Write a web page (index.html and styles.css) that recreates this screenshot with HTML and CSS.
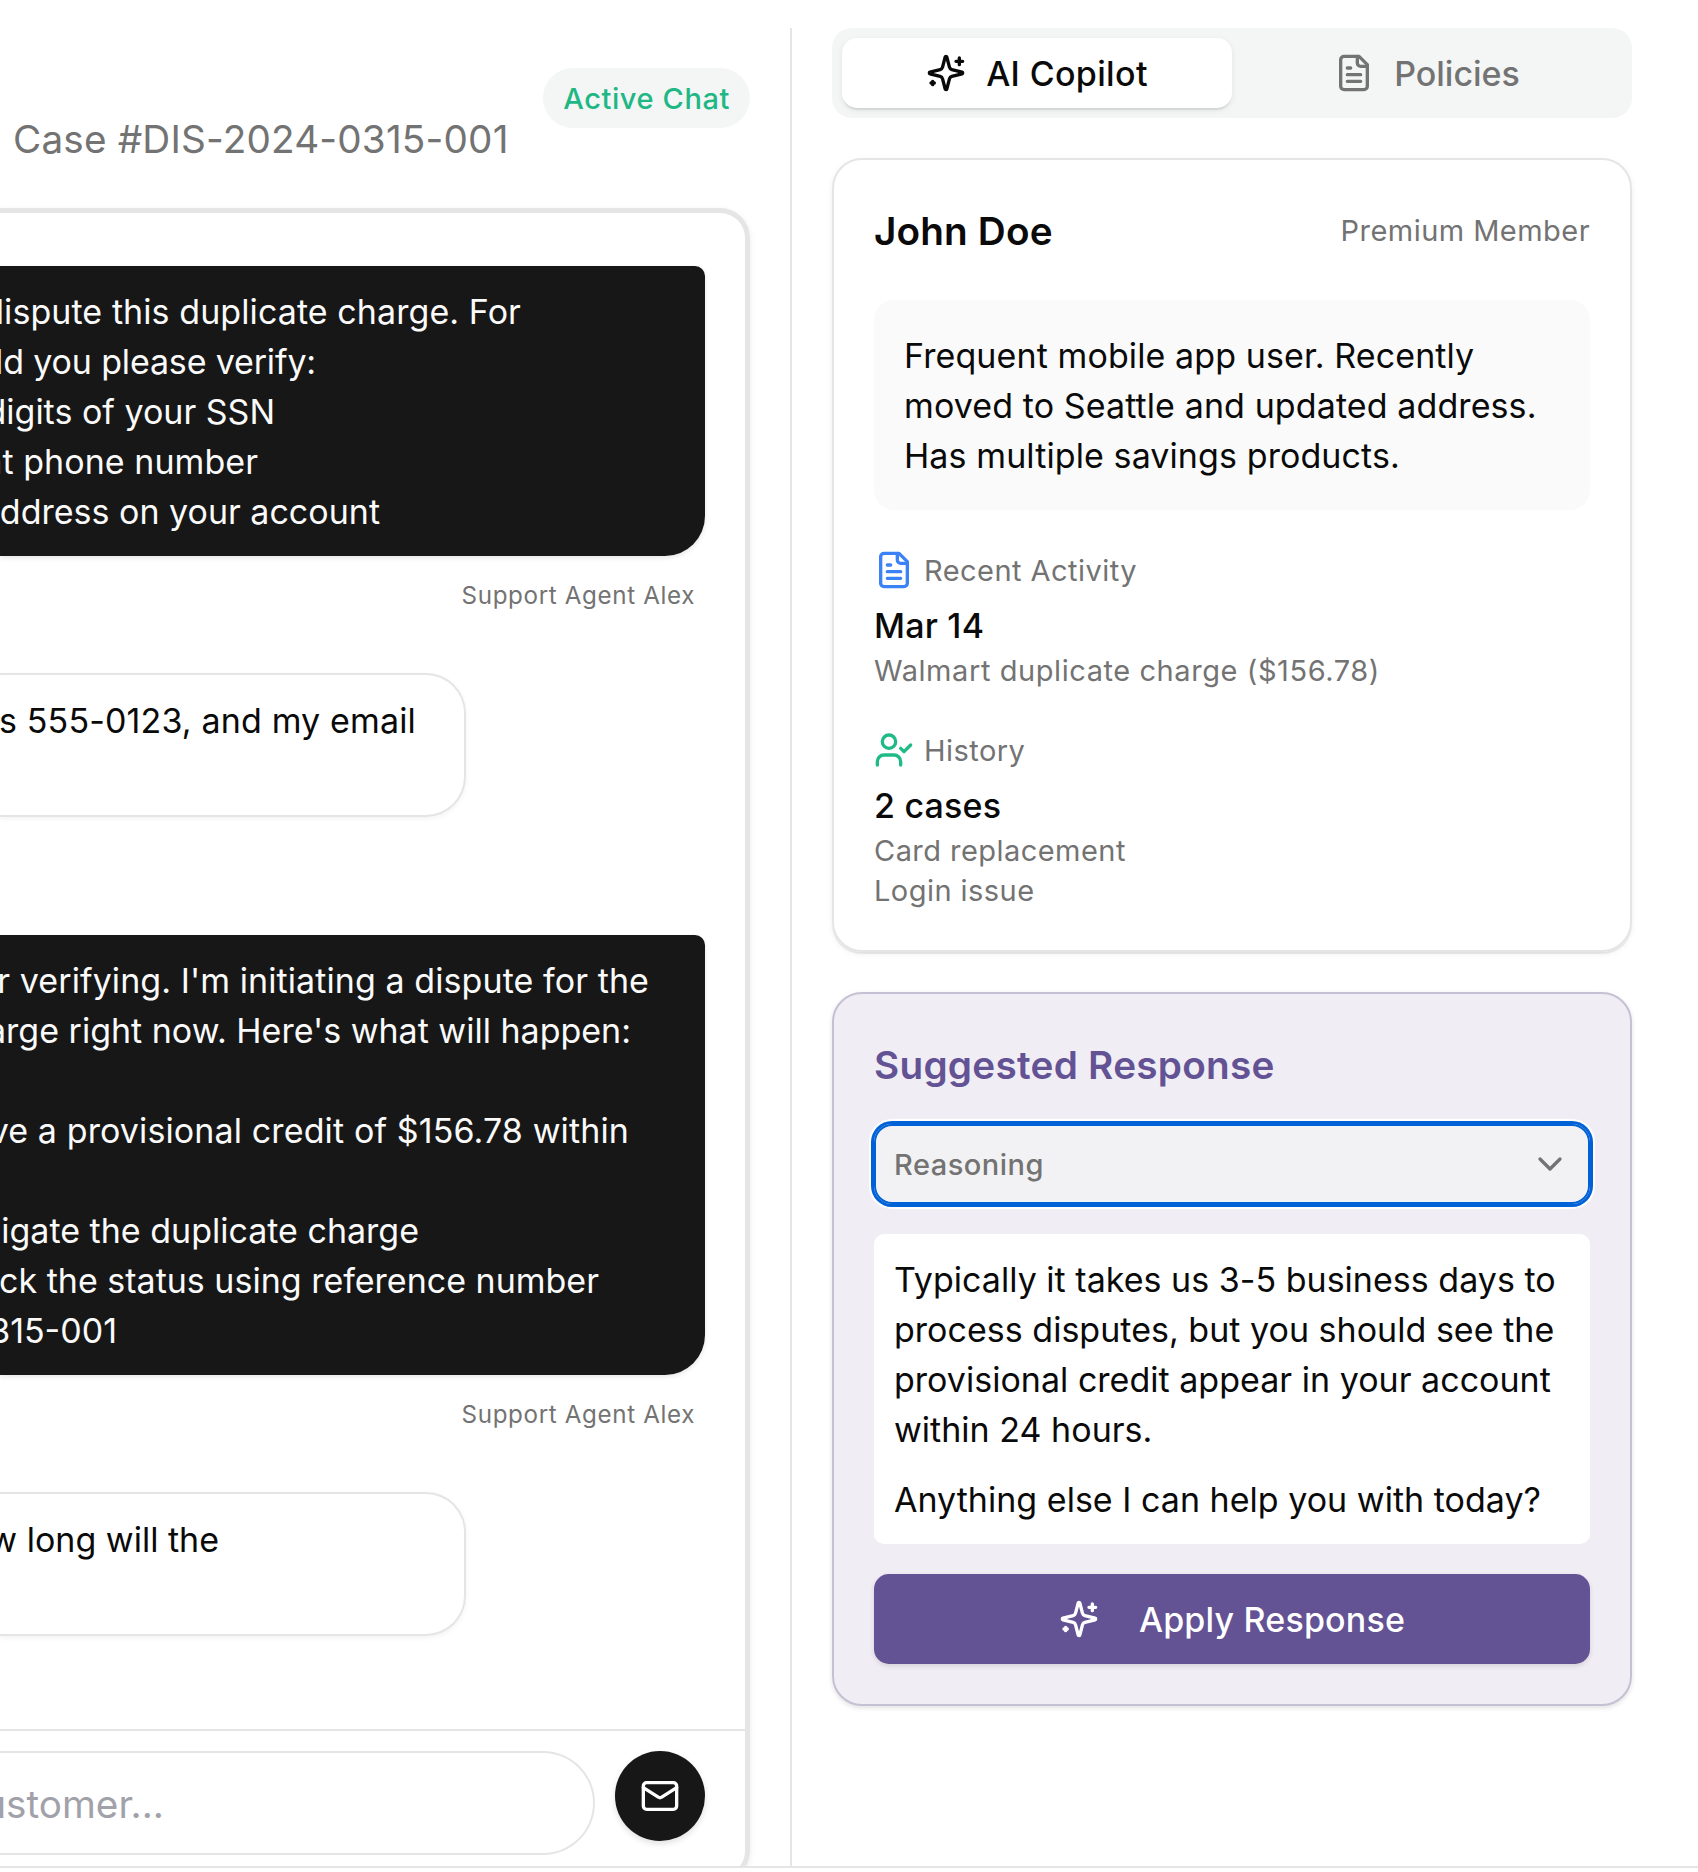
FILE: index.html
```html
<!DOCTYPE html>
<html lang="en">
<head>
    <meta charset="utf-8">
    <title>Support Dashboard</title>
    <link rel="stylesheet" href="styles.css">
</head>
<body>

    <main class="layout">
        <section class="chat">
            <header class="chat-header">
                <p class="case-id">Case #DIS-2024-0315-001</p>
                <span class="badge">Active Chat</span>
            </header>

            <div class="chat-card">
                <div class="messages">
                    <div class="bubble agent">
                        <span class="line l1">dispute this duplicate charge. For</span>
                        <span class="line l2">ld you please verify:</span>
                        <span class="line l3">digits of your SSN</span>
                        <span class="line l4">nt phone number</span>
                        <span class="line l5">address on your account</span>
                    </div>
                    <p class="sender">Support Agent Alex</p>

                    <div class="bubble customer">
                        <span class="line l6">s 555-0123, and my email</span>
                    </div>

                    <div class="bubble agent second">
                        <span class="line l7">r verifying. I'm initiating a dispute for the</span>
                        <span class="line l8">arge right now. Here's what will happen:</span>
                        <span class="line"></span>
                        <span class="line l9">ve a provisional credit of $156.78 within</span>
                        <span class="line"></span>
                        <span class="line l10">igate the duplicate charge</span>
                        <span class="line l11">ck the status using reference number</span>
                        <span class="line l12">315-001</span>
                    </div>
                    <p class="sender">Support Agent Alex</p>

                    <div class="bubble customer">
                        <span class="line l13">w long will the</span>
                    </div>
                </div>

                <div class="composer">
                    <div class="field"><span class="placeholder">ustomer...</span></div>
                    <button class="send" aria-label="Send">
                        <svg class="icon" viewBox="0 0 24 24"><rect width="20" height="16" x="2" y="4" rx="2"/><path d="m22 7-8.97 5.7a1.94 1.94 0 0 1-2.06 0L2 7"/></svg>
                    </button>
                </div>
            </div>
        </section>

        <aside class="sidebar">
            <nav class="tabs">
                <button class="tab active">
                    <svg class="icon" viewBox="0 0 24 24"><path d="M9.937 15.5A2 2 0 0 0 8.5 14.063l-6.135-1.582a.5.5 0 0 1 0-.962L8.5 9.936A2 2 0 0 0 9.937 8.5l1.582-6.135a.5.5 0 0 1 .963 0L14.063 8.5A2 2 0 0 0 15.5 9.937l6.135 1.581a.5.5 0 0 1 0 .964L15.5 14.063a2 2 0 0 0-1.437 1.437l-1.582 6.135a.5.5 0 0 1-.963 0z"/><path d="M20 3v4M22 5h-4M4 17v2M5 18H3"/></svg>
                    <span class="copilot">AI Copilot</span>
                </button>
                <button class="tab">
                    <svg class="icon" viewBox="0 0 24 24"><path d="M15 2H6a2 2 0 0 0-2 2v16a2 2 0 0 0 2 2h12a2 2 0 0 0 2-2V7Z"/><path d="M14 2v4a2 2 0 0 0 2 2h4M10 9H8M16 13H8M16 17H8"/></svg>
                    <span>Policies</span>
                </button>
            </nav>

            <div class="card profile">
                <div class="profile-head">
                    <h2>John Doe</h2>
                    <span class="small member">Premium Member</span>
                </div>
                <p class="note">Frequent mobile app user. Recently<br>moved to Seattle and updated address.<br>Has multiple savings products.</p>

                <div class="info">
                    <div class="info-title">
                        <svg class="icon blue" viewBox="0 0 24 24"><path d="M15 2H6a2 2 0 0 0-2 2v16a2 2 0 0 0 2 2h12a2 2 0 0 0 2-2V7Z"/><path d="M14 2v4a2 2 0 0 0 2 2h4M10 9H8M16 13H8M16 17H8"/></svg>
                        <span class="small">Recent Activity</span>
                    </div>
                    <strong>Mar 14</strong>
                    <p class="small charge">Walmart duplicate charge ($156.78)</p>
                </div>

                <div class="info">
                    <div class="info-title">
                        <svg class="icon green" viewBox="0 0 24 24"><path d="m16 11 2 2 4-4"/><path d="M16 21v-2a4 4 0 0 0-4-4H6a4 4 0 0 0-4 4v2"/><circle cx="9" cy="7" r="4"/></svg>
                        <span class="small">History</span>
                    </div>
                    <strong>2 cases</strong>
                    <p class="small">Card replacement<br>Login issue</p>
                </div>
            </div>

            <div class="card suggestion">
                <h2>Suggested Response</h2>
                <button class="reasoning">
                    <span>Reasoning</span>
                    <svg class="icon" viewBox="0 0 24 24"><path d="m6 9 6 6 6-6"/></svg>
                </button>
                <div class="response">
                    <p>Typically it takes us 3-5 business days to<br>process disputes, but you should see the<br>provisional credit appear in your account<br>within 24 hours.</p>
                    <p>Anything else I can help you with today?</p>
                </div>
                <button class="apply">
                    <svg class="icon" viewBox="0 0 24 24"><path d="M9.937 15.5A2 2 0 0 0 8.5 14.063l-6.135-1.582a.5.5 0 0 1 0-.962L8.5 9.936A2 2 0 0 0 9.937 8.5l1.582-6.135a.5.5 0 0 1 .963 0L14.063 8.5A2 2 0 0 0 15.5 9.937l6.135 1.581a.5.5 0 0 1 0 .964L15.5 14.063a2 2 0 0 0-1.437 1.437l-1.582 6.135a.5.5 0 0 1-.963 0z"/><path d="M20 3v4M22 5h-4M4 17v2M5 18H3"/></svg>
                    <span>Apply Response</span>
                </button>
            </div>
        </aside>
    </main>

</body>
</html>
```
FILE: styles.css
```css
* {
    box-sizing: border-box;
    margin: 0;
    padding: 0;
}

body {
    height: 1872px;
    overflow: hidden;
    background: #fff;
    color: #0a0a0a;
    font-family: Inter, sans-serif;
    font-size: 34px;
    line-height: 50px;
}

button {
    border: 0;
    background: none;
    color: inherit;
    font: inherit;
    font-weight: 500;
}

.icon {
    width: 40px;
    height: 40px;
    flex: none;
    fill: none;
    stroke: currentColor;
    stroke-width: 2;
    stroke-linecap: round;
    stroke-linejoin: round;
}

.blue { color: #3b82f6; }
.green { color: #1fba87; }

.layout {
    display: flex;
    height: 1868px;
    padding-top: 28px;
    border-bottom: 2px solid #e5e5e5;
    overflow: hidden;
}

/* chat column */
.chat {
    width: 792px;
    flex: none;
    border-right: 2px solid #e5e5e5;
    padding-right: 40px;
}

.chat-header {
    display: flex;
    justify-content: space-between;
    height: 180px;
    padding-top: 40px;
}

.case-id {
    margin: 41px 0 0 13px;
    font-size: 38.7px;
    line-height: 60px;
    letter-spacing: .17px;
    color: #737373;
}

.badge {
    height: 60px;
    padding: 0 20px;
    border-radius: 30px;
    background: #f4f5f5;
    color: #1fb885;
    font-size: 29px;
    font-weight: 500;
    line-height: 62px;
    letter-spacing: .6px;
}

.chat-card {
    display: flex;
    flex-direction: column;
    height: 1673px;
    border: 5px solid #e5e5e5;
    border-left: 0;
    border-radius: 0 30px 30px 0;
    box-shadow: 0 2px 6px rgba(0, 0, 0, .08);
}

.messages {
    display: flex;
    flex-direction: column;
    flex: none;
    height: 1516px;
    padding: 53px 40px 0 0;
}

.bubble {
    display: flex;
    flex-direction: column;
    align-items: flex-end;
    padding: 21px 0 19px;
}

.agent {
    background: #171717;
    color: #fafafa;
    border-radius: 0 10px 40px 0;
    box-shadow: 0 2px 5px rgba(0, 0, 0, .1);
}

.customer {
    width: 466px;
    height: 144px;
    margin-top: 57px;
    border: 2px solid #e5e5e5;
    border-left: 0;
    border-radius: 0 40px 40px 0;
    box-shadow: 0 2px 5px rgba(0, 0, 0, .05);
}

.second { margin-top: 118px; }

.sender {
    height: 40px;
    margin: 20px 10px 0 0;
    color: #737373;
    font-size: 24.2px;
    line-height: 40px;
    letter-spacing: .63px;
    text-align: right;
}

/* every line starts outside the window, so it is placed from its right end */
.line {
    height: 50px;
    white-space: nowrap;
}

.l1 { margin-right: 184px; letter-spacing: .08px; }
.l2 { margin-right: 389px; letter-spacing: -.15px; }
.l3 { margin-right: 430px; }
.l4 { margin-right: 447px; letter-spacing: .05px; }
.l5 { margin-right: 325px; }
.l6 { margin-right: 48px; letter-spacing: .15px; }
.l7 { margin-right: 56px; letter-spacing: .08px; }
.l8 { margin-right: 74px; }
.l9 { margin-right: 76px; letter-spacing: .12px; }
.l10 { margin-right: 286px; }
.l11 { margin-right: 106px; }
.l12 { margin-right: 588px; }
.l13 { margin-right: 245px; }

.composer {
    display: flex;
    gap: 20px;
    padding: 20px 40px 0 0;
    border-top: 2px solid #e5e5e5;
}

.field {
    display: flex;
    justify-content: flex-end;
    width: 595px;
    height: 104px;
    padding-right: 429px;
    border: 2px solid #e5e5e5;
    border-left: 0;
    border-radius: 0 52px 52px 0;
}

.placeholder {
    color: #a1a1aa;
    font-size: 38.7px;
    line-height: 102px;
}

.send {
    display: grid;
    place-items: center;
    width: 90px;
    height: 90px;
    border-radius: 50%;
    background: #171717;
    color: #fff;
    box-shadow: 0 3px 6px rgba(0, 0, 0, .12);
}

/* right column */
.sidebar {
    width: 840px;
    padding-left: 40px;
}

.tabs {
    display: flex;
    height: 90px;
    padding: 10px;
    border-radius: 20px;
    background: #f4f5f5;
}

.tab {
    display: flex;
    flex: 1;
    align-items: center;
    justify-content: center;
    gap: 20px;
    border-radius: 15px;
    color: #737373;
}

.tab span {
    padding-top: 2px;
}

.tab .copilot {
    letter-spacing: .35px;
}

.tab.active {
    background: #fff;
    color: #0a0a0a;
    box-shadow: 0 3px 1px -1px rgba(0, 0, 0, .08), 0 2px 6px rgba(0, 0, 0, .08);
}

.card {
    margin-top: 40px;
    padding: 0 40px;
    border: 2px solid #e5e5e5;
    border-radius: 30px;
    box-shadow: 0 2px 5px rgba(0, 0, 0, .12);
}

.card h2 {
    font-size: 38.7px;
    font-weight: 600;
    line-height: 60px;
    letter-spacing: .15px;
}

.profile {
    height: 794px;
    box-shadow: 0 2px 1px rgba(0, 0, 0, .08), 0 2px 6px rgba(0, 0, 0, .06);
}

.profile-head {
    display: flex;
    align-items: center;
    justify-content: space-between;
    padding-top: 41px;
}

.small {
    color: #737373;
    font-size: 29px;
    line-height: 40px;
    letter-spacing: .45px;
}

.charge {
    letter-spacing: .57px;
}

.note {
    margin-top: 39px;
    padding: 31px 30px 29px;
    border-radius: 20px;
    background: #fafafa;
    letter-spacing: .1px;
}

.info {
    margin-top: 40px;
}

.info-title {
    display: flex;
    align-items: center;
    gap: 10px;
    margin-bottom: 10px;
}

.info strong {
    display: block;
    font-weight: 500;
    letter-spacing: .2px;
}

.info .small,
.info strong {
    padding-top: 1px;
    margin-bottom: -1px;
}

.suggestion {
    height: 714px;
    border-color: #c5c0d3;
    background: #f0edf4;
}

.suggestion h2 {
    padding-top: 41px;
    color: #635294;
    letter-spacing: .27px;
}

.reasoning {
    display: flex;
    align-items: center;
    justify-content: space-between;
    width: 716px;
    height: 80px;
    margin-top: 29px;
    padding: 0 20px;
    border-radius: 18px;
    background: #f2f2f4;
    color: #737373;
    font-size: 29px;
    letter-spacing: .5px;
    box-shadow: inset 0 0 0 2px #0062d6, 0 0 0 3px #0062d6, 0 0 0 5px #fff;
}

.reasoning span {
    padding-top: 2px;
}

.response {
    margin-top: 30px;
    padding: 21px 20px 19px;
    border-radius: 10px;
    background: #fff;
    letter-spacing: .02px;
}

.response p + p {
    margin-top: 20px;
}

.apply {
    display: flex;
    align-items: center;
    justify-content: center;
    gap: 40px;
    width: 716px;
    height: 90px;
    margin-top: 30px;
    border-radius: 15px;
    background: #635294;
    color: #fff;
    letter-spacing: .18px;
    box-shadow: 0 2px 5px rgba(0, 0, 0, .12);
}

.apply span {
    padding-top: 2px;
}
```
